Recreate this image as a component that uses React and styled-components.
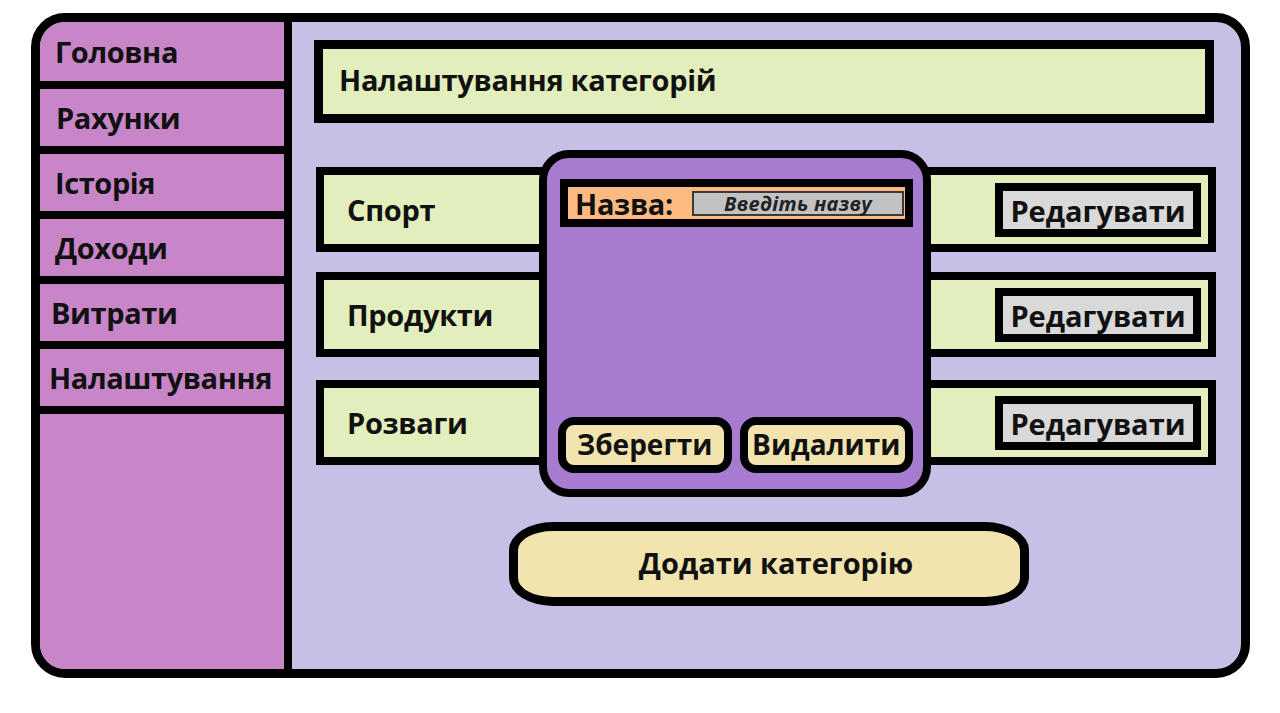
import React from "react"
import styled, { createGlobalStyle } from "styled-components"

const GlobalStyle = createGlobalStyle`
  html, body {
    margin: 0;
    padding: 0;
    background: #ffffff;
  }
  body {
    font-family: "Open Sans", "Noto Sans", "DejaVu Sans", sans-serif;
    color: #111;
  }
`

const navItems = [
  { label: "Головна", indent: 15 },
  { label: "Рахунки", indent: 16 },
  { label: "Історія", indent: 15 },
  { label: "Доходи", indent: 15 },
  { label: "Витрати", indent: 11 },
  { label: "Налаштування", indent: 9 },
]
const categories = [
  { name: "Спорт", gap: 0 },
  { name: "Продукти", gap: 20 },
  { name: "Розваги", gap: 23 },
]

export default function App() {
  return (
    <>
      <GlobalStyle />
      <Page>
        <Frame>
          <Sidebar>
            {navItems.map((item) => (
              <NavItem key={item.label} $indent={item.indent}>{item.label}</NavItem>
            ))}
          </Sidebar>

          <Main>
            <TitleBar>Налаштування категорій</TitleBar>

            <CategoryArea>
              {categories.map((c) => (
                <CategoryRow key={c.name} $gap={c.gap}>
                  <RowName>{c.name}</RowName>
                  <EditButton>Редагувати</EditButton>
                </CategoryRow>
              ))}

              <EditDialog>
                <NameBar>
                  <NameLabel>Назва:</NameLabel>
                  <NameInput>Введіть назву</NameInput>
                </NameBar>
                <DialogActions>
                  <DialogButton>Зберегти</DialogButton>
                  <DialogButton>Видалити</DialogButton>
                </DialogActions>
              </EditDialog>
            </CategoryArea>

            <AddButton>Додати категорію</AddButton>
          </Main>
        </Frame>
      </Page>
    </>
  )
}

const Page = styled.div`
  padding: 13px 0 0 31px;
  height: 700px;
`

const Frame = styled.div`
  width: 1219px;
  height: 665px;
  box-sizing: border-box;
  border: 9px solid #000;
  border-radius: 34px;
  overflow: hidden;
  display: flex;
  background: #c6c0e6;
`

const Sidebar = styled.nav`
  width: 252px;
  flex-shrink: 0;
  box-sizing: border-box;
  background: #c886c8;
  border-right: 8px solid #000;
  display: flex;
  flex-direction: column;
`

const NavItem = styled.div`
  height: 57px;
  border-bottom: 8px solid #000;
  display: flex;
  align-items: center;
  padding-left: ${(p) => p.$indent}px;
  font-size: 29px;
  font-weight: 700;
  letter-spacing: -0.4px;

  &:first-child {
    height: 59px;
  }
`

const Main = styled.main`
  flex: 1;
  display: flex;
  flex-direction: column;
  padding: 18px 27px 0 22px;
`

const TitleBar = styled.div`
  height: 83px;
  box-sizing: border-box;
  border: 9px solid #000;
  background: #e2eebb;
  display: flex;
  align-items: center;
  padding: 0 0 4px 16px;
  font-size: 29px;
  font-weight: 700;
  letter-spacing: -0.3px;
`

const CategoryArea = styled.div`
  position: relative;
  margin-top: 44px;
  display: flex;
  flex-direction: column;
`

const CategoryRow = styled.div`
  height: 85px;
  margin-top: ${(p) => p.$gap}px;
  margin-left: 2px;
  margin-right: -2px;
  box-sizing: border-box;
  border: 8px solid #000;
  background: #e2eebb;
  display: flex;
  align-items: center;
  justify-content: space-between;
  padding: 0 7px 0 23px;
`

const RowName = styled.span`
  font-size: 29px;
  font-weight: 700;
  letter-spacing: -0.3px;
`

const EditButton = styled.button`
  width: 206px;
  height: 54px;
  box-sizing: border-box;
  border: 8px solid #000;
  background: #d9d9d9;
  font-family: inherit;
  font-size: 29px;
  font-weight: 700;
  letter-spacing: 0;
  color: #111;
  padding: 0 0 3px;
`

const EditDialog = styled.div`
  position: absolute;
  left: 225px;
  top: -17px;
  width: 392px;
  height: 347px;
  box-sizing: border-box;
  border: 8px solid #000;
  border-radius: 30px;
  background: #a67bd0;
  display: flex;
  flex-direction: column;
  justify-content: space-between;
  padding: 21px 10px 16px 13px;
`

const NameBar = styled.div`
  width: 353px;
  height: 48px;
  box-sizing: border-box;
  border: 8px solid #000;
  background: #fdba80;
  display: flex;
  align-items: center;
  justify-content: space-between;
  padding: 0 1px 0 7px;
`

const NameLabel = styled.span`
  font-size: 29px;
  font-weight: 700;
  letter-spacing: -0.3px;
`

const NameInput = styled.div`
  width: 212px;
  height: 25px;
  box-sizing: border-box;
  border: 2px solid #3a3a3a;
  background: #c2c2c2;
  display: flex;
  align-items: center;
  justify-content: center;
  font-size: 20px;
  font-style: italic;
  font-weight: 700;
  letter-spacing: 0.3px;
  color: #222;
`

const DialogActions = styled.div`
  display: flex;
  gap: 8px;
  margin-left: -2px;
`

const DialogButton = styled.button`
  width: 174px;
  height: 56px;
  box-sizing: border-box;
  border: 8px solid #000;
  border-radius: 16px;
  background: #f1e4af;
  font-family: inherit;
  font-size: 28px;
  font-weight: 700;
  letter-spacing: 0;
  color: #111;
  padding: 0 0 3px;
`

const AddButton = styled.button`
  align-self: center;
  margin: 57px 0 0 10px;
  width: 520px;
  height: 84px;
  box-sizing: border-box;
  border: 9px solid #000;
  border-radius: 44px / 28px;
  background: #f1e4af;
  font-family: inherit;
  font-size: 29px;
  font-weight: 700;
  letter-spacing: 0;
  color: #111;
  padding: 0 0 4px 14px;
`
